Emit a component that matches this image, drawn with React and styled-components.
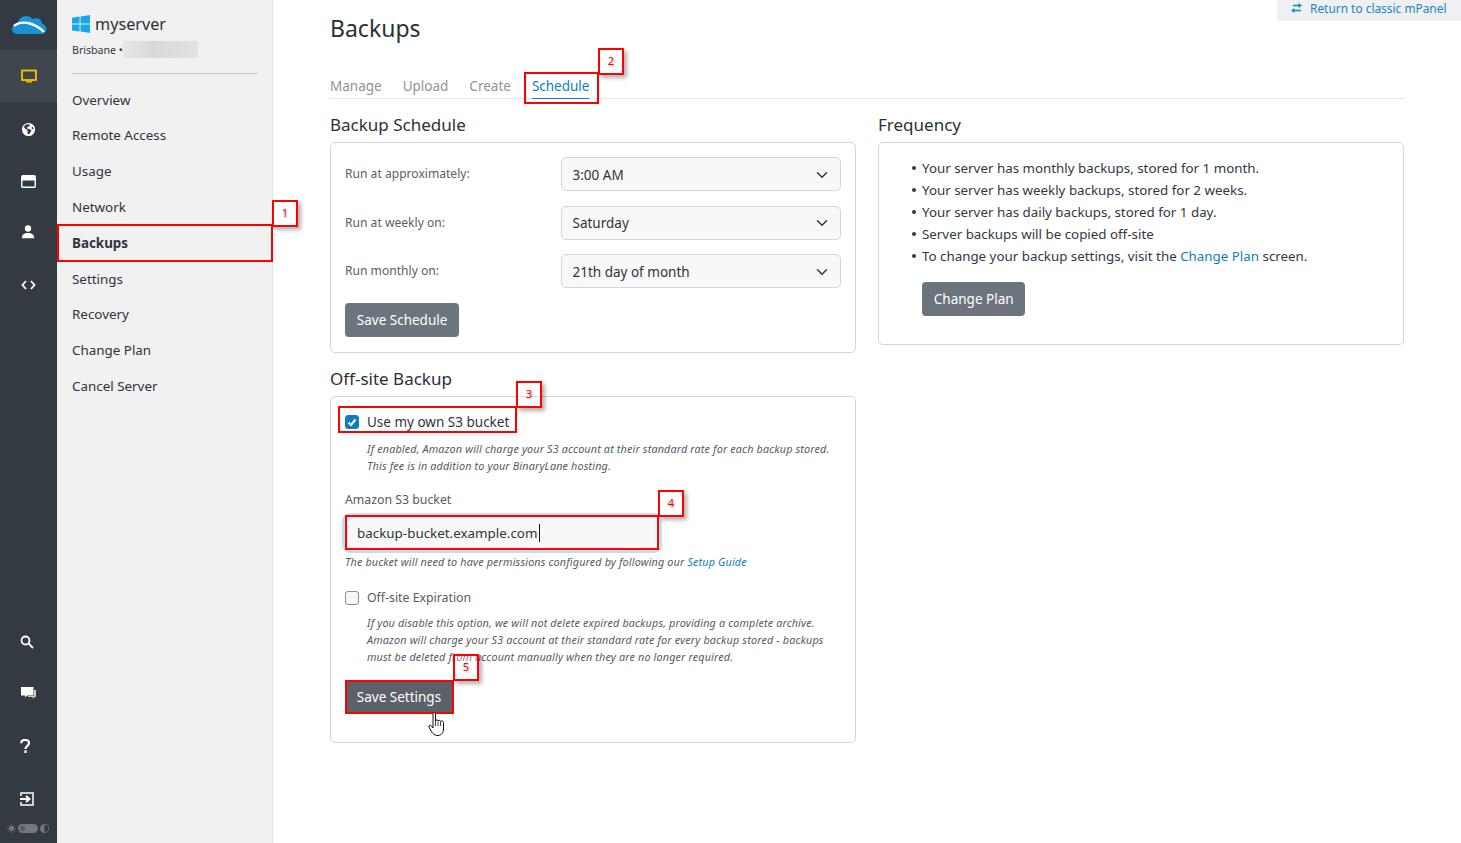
import React from "react";
import styled, { createGlobalStyle } from "styled-components";

const Global = createGlobalStyle`
  html, body { margin: 0; padding: 0; height: 100%; background: #fff; }
  body { font-family: "Noto Sans", "Open Sans", sans-serif; color: #2b3036; font-size: 13.5px; overflow: hidden; }
  * { box-sizing: border-box; }
`;

const Page = styled.div`position: relative; display: flex; width: 1461px; height: 843px; overflow: hidden; background: #fff;`;
const Rail = styled.nav`width: 57px; flex: none; background: #343a42; display: flex; flex-direction: column; align-items: center;`;
const RailLogo = styled.div`height: 50px; width: 100%; display: flex; align-items: center; justify-content: center;`;
const RailActive = styled.div`height: 52px; width: 100%; background: #40464e; display: flex; align-items: center; justify-content: center; color: #e6b800;`;
const RailItem = styled.div`height: ${p => p.$h || 52}px; width: 100%; display: flex; align-items: center; justify-content: center; color: #fff; padding-right: ${p => p.$shift || 0}px;`;
const RailSpacer = styled.div`flex: 1;`;
const Toggle = styled.div`height: 19px; width: 100%; display: flex; align-items: flex-start; justify-content: center; gap: 2px; color: #70757b; padding-right: 1px;`;
const ToggleTrack = styled.div`width: 20px; height: 9px; border-radius: 5px; background: #74787d; padding: 2px 0 0 2px;`;
const ToggleKnob = styled.div`width: 5px; height: 5px; border-radius: 50%; background: #565a60;`;

const SideNav = styled.aside`width: 216px; flex: none; background: #f1f1f1; border-right: 1px solid #e2e2e2; padding: 14px 15px 0 15px;`;
const ServerName = styled.div`display: flex; align-items: center; gap: 5px; font-size: 16.2px; line-height: 20px; color: #2b3036;`;
const ServerMeta = styled.div`display: flex; align-items: center; margin-top: 7px; font-size: 10.6px; line-height: 18px; color: #33383e; gap: 0;`;
const Blur = styled.span`display: block; width: 75px; height: 17px; margin-top: -2px; background: linear-gradient(90deg, #e6e6e6, #d9d9d9 40%, #dddddd 70%, #e2e2e2);`;
const NavRule = styled.hr`border: 0; border-top: 1px solid #c4c4c4; margin: 14px 0 7.7px; width: 186px;`;
const NavList = styled.ul`list-style: none; margin: 0; padding: 0;`;
const NavItem = styled.li`height: 35.8px; display: flex; align-items: center; font-size: 13.4px; font-weight: ${p => p.$active ? 700 : 400}; color: #2f343a;`;

const Main = styled.main`flex: 1; min-width: 0; padding: 0 57px; position: relative;`;
const Return = styled.div`position: absolute; top: 0; right: 0; width: 184px; height: 21px; background: #eef0f3; color: #1a85b8; display: flex; align-items: center; gap: 7px; padding: 0 0 5px 13px; font-size: 11.9px;`;
const Title = styled.h1`margin: 0; padding-top: 11px; font-size: 23px; line-height: 34px; font-weight: 400; color: #2b3036;`;
const Tabs = styled.div`display: flex; gap: 21px; margin-top: 23px; border-bottom: 1px solid #e3e5e7; height: 31px; font-size: 13.5px;`;
const Tab = styled.div`height: 31px; line-height: 34px; padding-top: 1px; color: ${p => p.$active ? "#0f7fb8" : "#8d9399"}; border-bottom: ${p => p.$active ? "1px solid #0f7fb8" : "0"};`;
const Columns = styled.div`display: grid; grid-template-columns: 526px 526px; gap: 22px; margin-top: 14px;`;
const Col = styled.div`display: flex; flex-direction: column;`;
const SectionTitle = styled.h2`margin: ${p => p.$top || 0}px 0 5px; font-size: 17px; line-height: 24px; font-weight: 400; color: #2b3036;`;
const Card = styled.section`border: 1px solid #d4d6d8; border-radius: 5px; background: #fff; padding: ${p => p.$pad || "15px 14px"};`;
const FormRow = styled.div`display: flex; align-items: center; height: 34px; margin-bottom: ${p => p.$mb ?? 14.5}px;`;
const RowLabel = styled.div`width: 216px; font-size: 12.1px; line-height: 18px; color: #5a6067;`;
const Select = styled.div`width: 280px; height: 34px; border: 1px solid #d4d6d8; border-radius: 5px; background: #f8f8f8; display: flex; align-items: center; justify-content: space-between; padding: 1px 12px 0 10.5px; font-size: 13.5px; color: #2f343a;`;
const Button = styled.div`display: inline-flex; align-items: center; height: 34px; padding: 0 11.8px; border-radius: 4px; background: ${p => p.$dark ? "#5a6169" : "#6c757d"}; color: #fff; font-size: 13.5px;`;
const CheckRow = styled.label`display: flex; align-items: center; gap: 8px; font-size: ${p => p.$small ? "12.3px" : "13.5px"}; line-height: 20px; color: ${p => p.$small ? "#555b62" : "#2f343a"}; margin-top: ${p => p.$top || 0}px;`;
const Check = styled.span`width: 14px; height: 14px; border-radius: 3px; display: flex; align-items: center; justify-content: center; background: ${p => p.$on ? "#0f7fb8" : "#f8f8f8"}; border: 1px solid ${p => p.$on ? "#0f7fb8" : "#8a8f94"};`;
const Note = styled.p`margin: ${p => p.$top || 0}px 0 0 ${p => p.$left ?? 22}px; font-size: 10.8px; letter-spacing: .15px; line-height: 17px; font-style: italic; color: #555b62;`;
const FieldLabel = styled.div`font-size: 12.3px; line-height: 18px; color: #555b62; margin-top: 17px;`;
const Input = styled.div`height: 34px; width: 314px; margin-top: 7px; border-radius: 5px; background: #f8f8f8; box-shadow: 0 0 0 3px #bfe0f2; display: flex; align-items: center; padding-left: 12px; font-size: 13.4px; color: #2f343a;`;
const Caret = styled.span`display: inline-block; width: 1px; height: 18px; background: #111; margin-left: 1px;`;
const InlineLink = styled.span`color: #0f7fb8;`;
const Bullets = styled.ul`list-style: none; margin: 0; padding: 0 0 0 29px; font-size: 13.35px; line-height: 22px; color: #33383e;`;
const Bullet = styled.li`
  &::before { content: ""; display: inline-block; width: 4px; height: 4px; border-radius: 50%; background: #33383e; margin: 0 6px 2px -10px; vertical-align: middle; }
`;
const ButtonWrap = styled.div`margin: ${p => p.$m || "0"};`;

const Mark = styled.div`position: absolute; left: ${p => p.$x}px; top: ${p => p.$y}px; width: ${p => p.$w}px; height: ${p => p.$h}px; border: 2px solid #f00; pointer-events: none;`;
const Badge = styled(Mark)`background: rgba(255,255,255,.25); box-shadow: 3px 3px 4px rgba(0,0,0,.3); color: #f00; font-size: 11px; line-height: 22px; text-align: center; text-shadow: 1px 1px 2px rgba(0,0,0,.35);`;
const Cursor = styled.svg`position: absolute; left: 428px; top: 712px;`;

const Chevron = () => (
  <svg width="12" height="12" viewBox="0 0 16 16" fill="none" stroke="#343a40" strokeWidth="2" strokeLinecap="round" strokeLinejoin="round"><path d="M2 5l6 6 6-6" /></svg>
);

const Logo = () => (
  <svg width="36" height="24" viewBox="0 0 36 24">
    <path d="M7 21c-4 0-6-2.500-6-5 0-3 2-5 5-5.500C8 6 11 3 15 3c3 0 5 1 6.500 3C26 4 31 6 31 11c3 .5 4.500 2.500 4.500 5S33 21 30 21z" fill="#1a93d6" />
    <path d="M3 13c7-6 20-4 30 6" fill="none" stroke="#fff" strokeWidth="2.400" />
  </svg>
);

const Windows = () => (
  <svg width="18" height="18" viewBox="0 0 18 18" fill="#19a8e6">
    <path d="M0 2.700l7.600-1.100v7H0zM8.500 1.500L18 0v8.600H8.500zM0 9.500h7.600v7L0 15.400zM8.500 9.500H18V18l-9.500-1.400z" />
  </svg>
);

const I = ({ children, w = 16, h = 16, box = "0 0 16 16" }) => (
  <svg width={w} height={h} viewBox={box} fill="currentColor">{children}</svg>
);

export default function App() {
  return (
    <Page>
      <Global />
      <Rail>
        <RailLogo><Logo /></RailLogo>
        <RailActive>
          <I><path fillRule="evenodd" d="M1 1.500h14a1 1 0 0 1 1 1v9.500a1 1 0 0 1-1 1h-4v1.500H5V13H1a1 1 0 0 1-1-1V2.500a1 1 0 0 1 1-1zm1 2v7.500h12V3.500z" /></I>
        </RailActive>
        <RailItem $h={54}>
          <I w={15} h={15}><path fillRule="evenodd" d="M8 1a7 7 0 1 1 0 14A7 7 0 0 1 8 1zM3 5c1 1 1 2 2 2.500S6.500 8 7 9s-.5 1.500 0 3 1.500 1.500 2 .5 1.500-2 2-3-1.500-1.500-2.500-2S6.500 7 6.500 6 8 5 9 4.500 9.500 3 8 2.500 4 3 3 5zm9 0c-.5.5-1 1-.5 2s1.500 1 2 .5c0-1-.5-2-1.500-2.500z" /></I>
        </RailItem>
        <RailItem $h={50}>
          <I w={15} h={13} box="0 0 16 14"><path fillRule="evenodd" d="M2 0h12a2 2 0 0 1 2 2v10a2 2 0 0 1-2 2H2a2 2 0 0 1-2-2V2a2 2 0 0 1 2-2zm-.5 6v6c0 .3.2.500.5.500h12c.3 0 .5-.2.500-.5V6z" /></I>
        </RailItem>
        <RailItem $h={52} $shift={1}>
          <I w={14} h={14}><circle cx="8" cy="4" r="3.600" /><path d="M1 15c0-4 2.500-6 7-6s7 2 7 6z" /></I>
        </RailItem>
        <RailItem $h={54}>
          <svg width="15" height="10" viewBox="0 0 15 10" fill="none" stroke="currentColor" strokeWidth="1.800"><path d="M5 1L1.500 5 5 9M10 1l3.500 4L10 9" /></svg>
        </RailItem>
        <RailSpacer />
        <RailItem $h={52} $shift={3}>
          <svg width="14" height="14" viewBox="0 0 14 14" fill="none" stroke="currentColor" strokeWidth="1.800"><circle cx="5.500" cy="5.500" r="4" /><path d="M8.500 8.500L13 13" /></svg>
        </RailItem>
        <RailItem $h={50} $shift={1}>
          <svg width="15" height="13" viewBox="0 0 15 13" fill="currentColor"><path d="M13 3h2v7h-2zM7 9h6v3l-2-2H7z" fill="#d9c9a8" /><path d="M0 0h12.500v8.500H6l-2 2v-2H0z" /></svg>
        </RailItem>
        <RailItem $h={56} $shift={6}>
          <svg width="11" height="14" viewBox="0 0 11 14" fill="none" stroke="currentColor" strokeWidth="2.200"><path d="M1.200 4.200C1.200 2 3 1 5 1s4 1 4 3c0 3-3.500 2.700-3.500 6" /><path d="M5.500 11.300V14" /></svg>
        </RailItem>
        <RailItem $h={50} $shift={3}>
          <svg width="14" height="14" viewBox="0 0 14 14" fill="none" stroke="currentColor" strokeWidth="1.500"><path d="M1 4V1h12v12H1v-3" /><path d="M0 7h8" strokeWidth="2" /><path d="M6 4l3.500 3L6 10" strokeWidth="2" /></svg>
        </RailItem>
        <Toggle>
          <svg width="9" height="9" viewBox="0 0 10 10" fill="currentColor"><circle cx="5" cy="5" r="3" /><path d="M5 0v1.500M5 8.500V10M0 5h1.500M8.500 5H10M1.500 1.500l1 1M7.500 7.500l1 1M1.500 8.500l1-1M7.500 2.500l1-1" stroke="currentColor" /></svg>
          <ToggleTrack><ToggleKnob /></ToggleTrack>
          <svg width="9" height="9" viewBox="0 0 10 10" fill="currentColor"><circle cx="5" cy="5" r="4.500" fill="none" stroke="currentColor" /><path d="M5 0.500a4.500 4.500 0 0 0 0 9z" /></svg>
        </Toggle>
      </Rail>

      <SideNav>
        <ServerName><Windows />myserver</ServerName>
        <ServerMeta>Brisbane •<Blur /></ServerMeta>
        <NavRule />
        <NavList>
          <NavItem>Overview</NavItem>
          <NavItem>Remote Access</NavItem>
          <NavItem>Usage</NavItem>
          <NavItem>Network</NavItem>
          <NavItem $active>Backups</NavItem>
          <NavItem>Settings</NavItem>
          <NavItem>Recovery</NavItem>
          <NavItem>Change Plan</NavItem>
          <NavItem>Cancel Server</NavItem>
        </NavList>
      </SideNav>

      <Main>
        <Return>
          <svg width="13" height="10" viewBox="0 0 13 10" fill="currentColor"><path d="M8.500 0L12 2.500 8.500 5V3.300H3V1.700h5.500zM4.500 5v1.700H11v1.600H4.500V10L1 7.500z" /></svg>
          Return to classic mPanel
        </Return>
        <Title>Backups</Title>
        <Tabs>
          <Tab>Manage</Tab>
          <Tab>Upload</Tab>
          <Tab>Create</Tab>
          <Tab $active>Schedule</Tab>
        </Tabs>
        <Columns>
          <Col>
            <SectionTitle>Backup Schedule</SectionTitle>
            <Card $pad="14px 14px 15px">
              <FormRow><RowLabel>Run at approximately:</RowLabel><Select>3:00 AM<Chevron /></Select></FormRow>
              <FormRow><RowLabel>Run at weekly on:</RowLabel><Select>Saturday<Chevron /></Select></FormRow>
              <FormRow><RowLabel>Run monthly on:</RowLabel><Select>21th day of month<Chevron /></Select></FormRow>
              <Button>Save Schedule</Button>
            </Card>
            <SectionTitle $top={14}>Off-site Backup</SectionTitle>
            <Card $pad="15px 14px 28px">
              <CheckRow>
                <Check $on>
                  <svg width="10" height="10" viewBox="0 0 10 10" fill="none" stroke="#fff" strokeWidth="2"><path d="M1.500 5.500L4 8l4.500-5.500" /></svg>
                </Check>
                Use my own S3 bucket
              </CheckRow>
              <Note $top={8}>If enabled, Amazon will charge your S3 account at their standard rate for each backup stored.<br />This fee is in addition to your BinaryLane hosting.</Note>
              <FieldLabel>Amazon S3 bucket</FieldLabel>
              <Input>backup-bucket.example.com<Caret /></Input>
              <Note $left={0} $top={3}>The bucket will need to have permissions configured by following our <InlineLink>Setup Guide</InlineLink></Note>
              <CheckRow $small $top={18}><Check />Off-site Expiration</CheckRow>
              <Note $top={6}>If you disable this option, we will not delete expired backups, providing a complete archive.<br />Amazon will charge your S3 account at their standard rate for every backup stored - backups<br />must be deleted from account manually when they are no longer required.</Note>
              <ButtonWrap $m="15px 0 0"><Button $dark>Save Settings</Button></ButtonWrap>
            </Card>
          </Col>
          <Col>
            <SectionTitle>Frequency</SectionTitle>
            <Card $pad="14px 14px 28px">
              <Bullets>
                <Bullet>Your server has monthly backups, stored for 1 month.</Bullet>
                <Bullet>Your server has weekly backups, stored for 2 weeks.</Bullet>
                <Bullet>Your server has daily backups, stored for 1 day.</Bullet>
                <Bullet>Server backups will be copied off-site</Bullet>
                <Bullet>To change your backup settings, visit the <InlineLink>Change Plan</InlineLink> screen.</Bullet>
              </Bullets>
              <ButtonWrap $m="15px 0 0 29px"><Button>Change Plan</Button></ButtonWrap>
            </Card>
          </Col>
        </Columns>
      </Main>

      <Mark $x={57} $y={224} $w={216} $h={38} />
      <Badge $x={272} $y={200} $w={26} $h={27}>1</Badge>
      <Mark $x={524} $y={72} $w={75} $h={32} />
      <Badge $x={598} $y={48} $w={26} $h={27}>2</Badge>
      <Mark $x={338} $y={406} $w={179} $h={27} />
      <Badge $x={516} $y={381} $w={26} $h={27}>3</Badge>
      <Mark $x={345} $y={515} $w={314} $h={35} />
      <Badge $x={658} $y={490} $w={26} $h={27}>4</Badge>
      <Mark $x={345} $y={680} $w={109} $h={34} />
      <Badge $x={453} $y={654} $w={26} $h={27}>5</Badge>
      <Cursor width="18" height="24" viewBox="0 0 18 24">
        <path d="M5 2c0-2 2.500-2 2.500 0v7c.5-1.500 2.500-1.500 2.500 0 .5-1 2.500-1 2.500.5.5-1 3-.8 3 1V17c0 3-2 6.500-5.500 6.500S5 22 3 19l-2-4c-.5-1.500 1-2.500 2-1.500L5 16z" fill="#fff" stroke="#111" strokeWidth="1" />
        <path d="M7.500 9v5M10 9.500V14M12.500 10v4" fill="none" stroke="#111" strokeWidth=".8" />
      </Cursor>
    </Page>
  );
}
